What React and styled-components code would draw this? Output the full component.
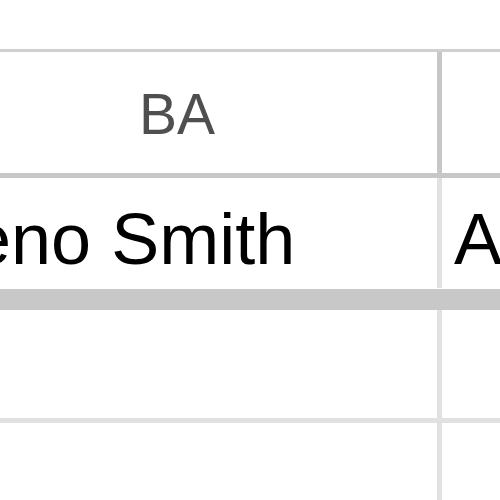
import React from "react";
import styled, { createGlobalStyle } from "styled-components";

const Global = createGlobalStyle`
  html, body { margin: 0; padding: 0; background: #fff; overflow: hidden; }
  body { font-family: "Liberation Sans", Arial, sans-serif; }
`;

const Viewport = styled.div`
  width: 500px;
  height: 500px;
  overflow: hidden;
  padding-top: 49px;
  box-sizing: border-box;
`;

const Sheet = styled.div`
  margin-left: -93px;
  width: 700px;
`;

const Row = styled.div`
  display: grid;
  grid-template-columns: 535px 1fr;
  height: ${(p) => p.$h}px;
  box-sizing: content-box;
  border-top: ${(p) => (p.$top ? `3px solid ${p.$top}` : "none")};
  border-bottom: ${(p) => (p.$bottom ? `5px solid ${p.$bottom}` : "none")};
`;

const HeaderCell = styled.div`
  display: flex;
  align-items: center;
  justify-content: center;
  padding: 3px 0 0 10px;
  box-sizing: border-box;
  font-size: 57px;
  line-height: 1;
  color: #4f4f4f;
  border-right: ${(p) => (p.$divider ? "5px solid #c7c7c7" : "none")};
`;

const Cell = styled.div`
  display: flex;
  align-items: flex-end;
  padding: 0 0 13px ${(p) => p.$pad ?? 12}px;
  box-sizing: border-box;
  font-size: 72px;
  line-height: 1;
  color: #000;
  white-space: nowrap;
  overflow: hidden;
  border-right: ${(p) => (p.$divider ? "5px solid #e1e1e1" : "none")};
`;

const FrozenBar = styled.div`
  height: 21px;
  margin-top: 1px;
  background: #c8c8c8;
`;

export default function App() {
  return (
    <>
      <Global />
      <Viewport>
        <Sheet>
          <Row $h={121} $top="#d0d0d0" $bottom="#c7c7c7">
            <HeaderCell $divider>BA</HeaderCell>
            <HeaderCell />
          </Row>
          <Row $h={110}>
            <Cell $divider $pad={8}>Geno Smith</Cell>
            <Cell>A</Cell>
          </Row>
          <FrozenBar />
          <Row $h={108} $bottom="#e1e1e1">
            <Cell $divider />
            <Cell />
          </Row>
          <Row $h={108} $bottom="#e1e1e1">
            <Cell $divider />
            <Cell />
          </Row>
        </Sheet>
      </Viewport>
    </>
  );
}
